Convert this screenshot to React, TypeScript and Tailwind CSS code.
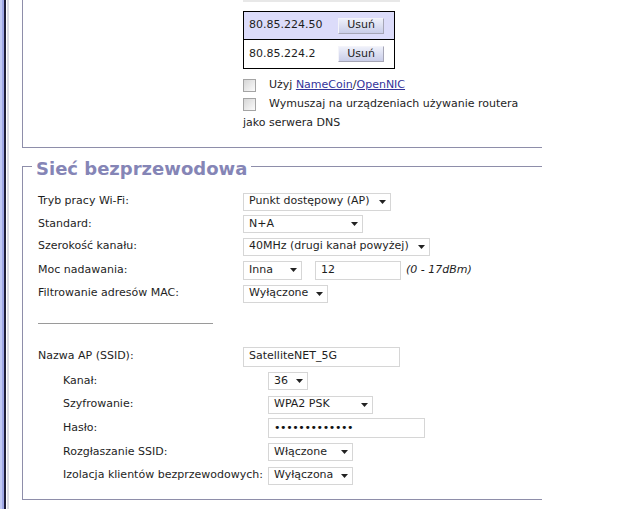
const border = 'border-[#8e8eaa]'

function Arrow() {
  return (
    <svg width="7" height="4" viewBox="0 0 7 4" className="shrink-0">
      <polygon points="0,0 7,0 3.5,4" fill="#222" />
    </svg>
  )
}

function Select({ value, className }: { value: string; className: string }) {
  return (
    <div className={`flex items-center justify-between border border-[#d6d6d6] bg-white pl-[5px] pr-[4px] ${className}`}>
      <span className="whitespace-nowrap">{value}</span>
      <Arrow />
    </div>
  )
}

function Input({ value, className }: { value: string; className: string }) {
  return (
    <div className={`flex items-center border border-[#d6d6d6] bg-white pl-[5px] ${className}`}>
      <span className="whitespace-nowrap">{value}</span>
    </div>
  )
}

function Row({ label, className, children }: { label: string; className: string; children: React.ReactNode }) {
  return (
    <div className={`flex items-center ${className}`}>
      <div className="w-[205px] shrink-0 whitespace-nowrap">{label}</div>
      <div className="flex items-center">{children}</div>
    </div>
  )
}

function Checkbox() {
  return <span className="inline-block h-[13px] w-[13px] shrink-0 border border-[#a4a4a4] bg-gradient-to-br from-[#d6d6d6] to-[#fbfbfb]" />
}

function DnsRow({ ip, first }: { ip: string; first?: boolean }) {
  return (
    <div className={`flex h-[28px] items-center pl-[5px] ${first ? 'border-b border-black bg-[#dcdcfa]' : 'bg-white'}`}>
      <span className="w-[89px]">{ip}</span>
      <button className="flex h-[16px] w-[46px] items-center justify-center border border-[#a6a6b6] border-t-[#f4f4fa] border-l-[#f4f4fa] bg-gradient-to-b from-[#eef0fa] to-[#c9cde8] text-[11px] text-[#222]">
        Usuń
      </button>
    </div>
  )
}

export default function App() {
  return (
    <div className="flex h-[509px] overflow-hidden bg-white font-['DejaVu_Sans',Verdana,sans-serif] text-[11px] text-[#1e1e1e]">
      <div className="flex shrink-0">
        <div className="w-[2px] bg-[#c2caf4]" />
        <div className="w-[2px] bg-[#a0a8e6]" />
        <div className="w-[2px] bg-[#1e1e3a]" />
        <div className="w-px bg-white" />
        <div className="w-[2px] bg-[#dcdce4]" />
      </div>

      <div className="ml-[13px] w-[520px]">
        {/* DNS */}
        <div className={`border-b border-l ${border} pb-[14px]`}>
          <div className="pl-[220px]">
            <div className="h-[2px] w-[157px] bg-[#e8e8e8]" />
            <div className="mt-[9px] w-[152px] border border-black">
              <DnsRow ip="80.85.224.50" first />
              <DnsRow ip="80.85.224.2" />
            </div>
            <div className="mt-[7px] flex h-[19px] items-center gap-[13px]">
              <Checkbox />
              <span>
                Użyj <a href="#" className="text-[#33339a] underline">NameCoin</a>/<a href="#" className="text-[#33339a] underline">OpenNIC</a>
              </span>
            </div>
            <div className="flex h-[19px] items-center gap-[13px]">
              <Checkbox />
              <span className="whitespace-nowrap">Wymuszaj na urządzeniach używanie routera</span>
            </div>
            <div className="flex h-[19px] items-center">jako serwera DNS</div>
          </div>
        </div>

        {/* Wireless */}
        <div className="mt-[6px] flex h-[24px] items-start">
          <div className={`mt-[12px] h-[12px] w-[10px] border-l border-t ${border}`} />
          <span className="px-[4px] pt-[4px] text-[18px] font-bold leading-[22px] text-[#8585b6]">Sieć bezprzewodowa</span>
          <div className={`mt-[12px] flex-1 border-t ${border}`} />
        </div>
        <div className={`border-b border-l ${border} pb-[12px] pl-[15px] pt-[12px]`}>
          <Row label="Tryb pracy Wi-Fi:" className="h-[23px]">
            <Select value="Punkt dostępowy (AP)" className="h-[18px] w-[148px]" />
          </Row>
          <Row label="Standard:" className="h-[22px]">
            <Select value="N+A" className="h-[18px] w-[120px]" />
          </Row>
          <Row label="Szerokość kanału:" className="h-[23px]">
            <Select value="40MHz (drugi kanał powyżej)" className="h-[18px] w-[187px]" />
          </Row>
          <Row label="Moc nadawania:" className="h-[24px]">
            <Select value="Inna" className="h-[19px] w-[59px]" />
            <Input value="12" className="ml-[13px] h-[19px] w-[86px]" />
            <span className="ml-[5px] italic">(0 - 17dBm)</span>
          </Row>
          <Row label="Filtrowanie adresów MAC:" className="h-[23px]">
            <Select value="Wyłączone" className="h-[18px] w-[85px]" />
          </Row>

          <div className="mt-[18px] h-px w-[175px] bg-[#9a9a9a]" />

          <Row label="Nazwa AP (SSID):" className="mt-[20px] h-[25px]">
            <Input value="SatelliteNET_5G" className="h-[20px] w-[157px]" />
          </Row>
          <div className="pl-[25px]">
            <Row label="Kanał:" className="h-[24px]">
              <Select value="36" className="h-[18px] w-[40px]" />
            </Row>
            <Row label="Szyfrowanie:" className="h-[23px]">
              <Select value="WPA2 PSK" className="h-[18px] w-[105px]" />
            </Row>
            <Row label="Hasło:" className="h-[24px]">
              <Input value="•••••••••••••" className="h-[20px] w-[157px] tracking-[-0.4px] text-[#111]" />
            </Row>
            <Row label="Rozgłaszanie SSID:" className="h-[24px]">
              <Select value="Włączone" className="h-[18px] w-[85px]" />
            </Row>
            <Row label="Izolacja klientów bezprzewodowych:" className="h-[23px]">
              <Select value="Wyłączona" className="h-[18px] w-[85px]" />
            </Row>
          </div>
        </div>
      </div>
    </div>
  )
}
